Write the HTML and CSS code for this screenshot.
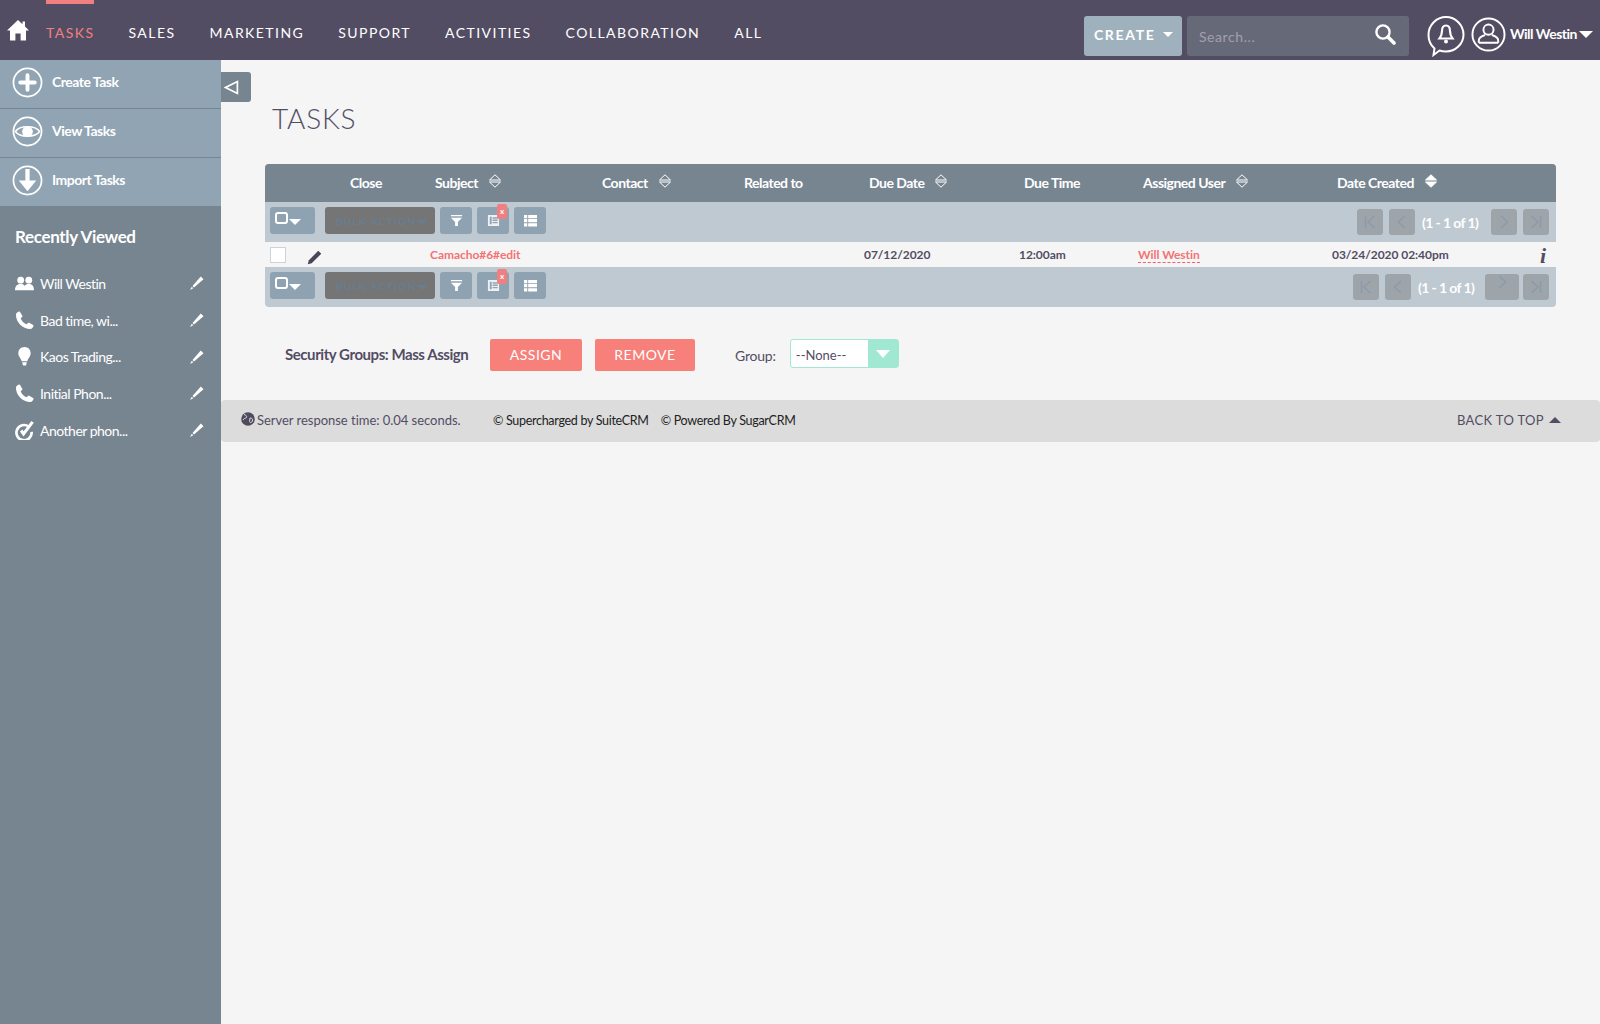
FILE: index.html
```html
<!DOCTYPE html>
<html lang="en">
<head>
  <meta charset="UTF-8" />
  <title>Tasks</title>
  <link rel="stylesheet" href="styles.css">
</head>
<body>

<header class="topbar">
  <svg class="home-icon" viewBox="0 0 22 22"><path d="M11 1 L15.500 5.200 V2.500 H18 V7.600 L22 11.600 H19 V21.500 H13.600 V14.500 H8.400 V21.500 H3 V11.600 H0 Z" fill="#fff"/></svg>
  <nav class="nav">
    <a class="active">TASKS</a>
    <a>SALES</a>
    <a>MARKETING</a>
    <a>SUPPORT</a>
    <a>ACTIVITIES</a>
    <a>COLLABORATION</a>
    <a>ALL</a>
  </nav>
  <div class="top-right">
    <div class="create-btn">CREATE <i class="caret"></i></div>
    <div class="search">
      <span>Search...</span>
      <svg viewBox="0 0 22 22"><circle cx="9" cy="9" r="6.600" fill="none" stroke="#fff" stroke-width="2.400"/><path d="M14 14 L20 20" stroke="#fff" stroke-width="3.600" stroke-linecap="round"/></svg>
    </div>
    <svg class="bell" viewBox="0 0 38 42"><path d="M7.500 33.500 C3.500 30 1.500 25 1.500 20 C1.500 10 9.500 2 19 2 C28.500 2 36.500 10 36.500 19.500 C36.500 29 28.500 36.500 19 36.500 C16.500 36.500 14.500 36.200 12.500 35.500 L6.500 40 Z" fill="none" stroke="#fff" stroke-width="2"/><path d="M19 10.500 C16 10.500 15 13 15 16 C15 19.500 14 21.500 12.500 23.500 H25.500 C24 21.500 23 19.500 23 16 C23 13 22 10.500 19 10.500 Z" fill="none" stroke="#fff" stroke-width="2.200"/><circle cx="19" cy="26.500" r="2" fill="#fff"/></svg>
    <svg class="user" viewBox="0 0 36 36"><circle cx="18" cy="18" r="16.500" fill="none" stroke="#fff" stroke-width="2"/><circle cx="18" cy="13" r="5.200" fill="none" stroke="#fff" stroke-width="2"/><path d="M8 26.500 V24.500 C8 21.500 11 19.500 14.500 18.500 M28 26.500 V24.500 C28 21.500 25 19.500 21.500 18.500 M8 26.500 H28" fill="none" stroke="#fff" stroke-width="2"/></svg>
    <span class="user-name">Will Westin</span>
    <i class="caret user-caret"></i>
  </div>
</header>

<div class="layout">
  <aside class="sidebar">
    <a class="action">
      <svg viewBox="0 0 32 32"><circle cx="16" cy="16" r="14.500" fill="none" stroke="#fff" stroke-width="1.800"/><path d="M16 8.500 V23.500 M8.500 16 H23.500" stroke="#fff" stroke-width="4" stroke-linecap="round"/></svg>
      Create Task
    </a>
    <a class="action">
      <svg viewBox="0 0 32 32"><circle cx="16" cy="16" r="14.500" fill="none" stroke="#fff" stroke-width="1.800"/><path d="M3.500 16 C8 9.500 24 9.500 28.500 16 C24 22.500 8 22.500 3.500 16 Z" fill="none" stroke="#fff" stroke-width="1.600"/><circle cx="16" cy="16" r="5.500" fill="#fff"/></svg>
      View Tasks
    </a>
    <a class="action">
      <svg viewBox="0 0 32 32"><circle cx="16" cy="16" r="14.500" fill="none" stroke="#fff" stroke-width="1.800"/><path d="M13.800 4 H18.200 V16 H25 L16 27 L7 16 H13.800 Z" fill="#fff"/></svg>
      Import Tasks
    </a>

    <h3 class="recent-title">Recently Viewed</h3>
    <ul class="recent">
      <li>
        <svg class="recent-icon" viewBox="0 0 20 16"><circle cx="6" cy="4.500" r="3.600" fill="#fff"/><circle cx="14.500" cy="4.500" r="3.600" fill="#fff"/><path d="M0 15 C0 10 3 8.500 6 8.500 C8 8.500 9.500 9.200 10.200 10.500 C11 9.200 12.500 8.500 14.500 8.500 C17.500 8.500 20 10 20 15 Z" fill="#fff"/></svg>
        <span>Will Westin</span>
        <svg class="recent-edit" viewBox="0 0 14 14"><path d="M10.800 .5 L13.500 3.200 L4 11.500 L2.500 10 Z M0 14 L1.800 10.800 L3.300 12.300 Z" fill="#fff"/></svg>
      </li>
      <li>
        <svg class="recent-icon" viewBox="0 0 20 20"><path d="M1 4 C1 2 3 .5 5 .5 L8 5.500 L6 8 C7 10.500 9.500 13 12 14 L14.500 12 L19.500 15 C19.500 17 18 19 16 19 C8 19 1 12 1 4 Z" fill="#fff"/></svg>
        <span>Bad time, wi...</span>
        <svg class="recent-edit" viewBox="0 0 14 14"><path d="M10.800 .5 L13.500 3.200 L4 11.500 L2.500 10 Z M0 14 L1.800 10.800 L3.300 12.300 Z" fill="#fff"/></svg>
      </li>
      <li>
        <svg class="recent-icon" viewBox="0 0 20 20"><path d="M10 0 C14 0 16.500 3 16.500 6.500 C16.500 10 13.500 12 13 15 H7 C6.500 12 3.500 10 3.500 6.500 C3.500 3 6 0 10 0 Z M7.500 16 H12.500 L11.500 19.500 H8.500 Z" fill="#fff"/></svg>
        <span>Kaos Trading...</span>
        <svg class="recent-edit" viewBox="0 0 14 14"><path d="M10.800 .5 L13.500 3.200 L4 11.500 L2.500 10 Z M0 14 L1.800 10.800 L3.300 12.300 Z" fill="#fff"/></svg>
      </li>
      <li>
        <svg class="recent-icon" viewBox="0 0 20 20"><path d="M1 4 C1 2 3 .5 5 .5 L8 5.500 L6 8 C7 10.500 9.500 13 12 14 L14.500 12 L19.500 15 C19.500 17 18 19 16 19 C8 19 1 12 1 4 Z" fill="#fff"/></svg>
        <span>Initial Phon...</span>
        <svg class="recent-edit" viewBox="0 0 14 14"><path d="M10.800 .5 L13.500 3.200 L4 11.500 L2.500 10 Z M0 14 L1.800 10.800 L3.300 12.300 Z" fill="#fff"/></svg>
      </li>
      <li>
        <svg class="recent-icon" viewBox="0 0 20 20"><path d="M14.500 6 A8 8 0 1 0 17.500 11.500" fill="none" stroke="#fff" stroke-width="2.800"/><path d="M6.500 10 L9 13.500 L18.500 1" fill="none" stroke="#fff" stroke-width="3.200"/></svg>
        <span>Another phon...</span>
        <svg class="recent-edit" viewBox="0 0 14 14"><path d="M10.800 .5 L13.500 3.200 L4 11.500 L2.500 10 Z M0 14 L1.800 10.800 L3.300 12.300 Z" fill="#fff"/></svg>
      </li>
    </ul>
  </aside>

  <main class="main">
    <div class="collapse-btn">
      <svg viewBox="0 0 14 14"><path d="M12.500 1.500 V12.500 L1.500 7 Z" fill="none" stroke="#fff" stroke-width="1.600"/></svg>
    </div>

    <div class="content">
      <h1 class="title">TASKS</h1>

      <div class="list">
        <div class="list-head">
          <div></div><div></div>
          <div>Close</div>
          <div>Subject <svg class="sort" viewBox="0 0 12 14"><path d="M6 .8 L11.500 6 H.5 Z M.5 8 H11.500 L6 13.200 Z" fill="none" stroke="#fff"/></svg></div>
          <div>Contact <svg class="sort" viewBox="0 0 12 14"><path d="M6 .8 L11.500 6 H.5 Z M.5 8 H11.500 L6 13.200 Z" fill="none" stroke="#fff"/></svg></div>
          <div>Related to</div>
          <div>Due Date <svg class="sort" viewBox="0 0 12 14"><path d="M6 .8 L11.500 6 H.5 Z M.5 8 H11.500 L6 13.200 Z" fill="none" stroke="#fff"/></svg></div>
          <div>Due Time</div>
          <div>Assigned User <svg class="sort" viewBox="0 0 12 14"><path d="M6 .8 L11.500 6 H.5 Z M.5 8 H11.500 L6 13.200 Z" fill="none" stroke="#fff"/></svg></div>
          <div>Date Created <svg class="sort" viewBox="0 0 12 14"><path d="M6 .8 L11.500 6 H.5 Z" fill="#fff" stroke="#fff"/><path d="M.5 8 H11.500 L6 13.200 Z" fill="#fff" stroke="#fff"/></svg></div>
          <div></div>
        </div>

        <div class="toolbar">
          <div class="tool tool-select"><i class="box"></i><i class="caret"></i></div>
          <div class="bulk">BULK ACTION<i class="caret"></i></div>
          <div class="tool"><svg viewBox="0 0 14 14"><path d="M1 1 H13 V2.500 H1 Z M1 4 H13 L8.500 8.500 V13 H5.500 V8.500 Z" fill="#fff"/></svg></div>
          <div class="tool tool-badge"><svg viewBox="0 0 14 14"><path d="M1 1 H13 V13 H1 Z M3 3 V11 H5 V3 Z M6 3.500 V5 H11.500 V3.500 Z M6 6 V7.500 H11.500 V6 Z M6 8.500 V10 H11.500 V8.500 Z" fill="#fff" fill-rule="evenodd" opacity=".85"/></svg><span class="badge">x</span></div>
          <div class="tool"><svg viewBox="0 0 14 14"><path d="M0 1 H3.500 V4.500 H0 Z M4.500 1 H14 V4.500 H4.500 Z M0 5.500 H3.500 V9 H0 Z M4.500 5.500 H14 V9 H4.500 Z M0 10 H3.500 V13.500 H0 Z M4.500 10 H14 V13.500 H4.500 Z" fill="#fff"/></svg></div>
          <div class="pager">
            <div class="page-btn"><svg viewBox="0 0 14 14"><path d="M2.500 1 V13 M11.500 1 L5 7 L11.500 13" fill="none" stroke="#8d9ba8" stroke-width="1.600"/></svg></div>
            <div class="page-btn"><svg viewBox="0 0 14 14"><path d="M10 1 L3.500 7 L10 13" fill="none" stroke="#8d9ba8" stroke-width="1.600"/></svg></div>
            <span class="page-text">(1 - 1 of 1)</span>
            <div class="page-btn"><svg viewBox="0 0 14 14"><path d="M4 1 L10.500 7 L4 13" fill="none" stroke="#8d9ba8" stroke-width="1.600"/></svg></div>
            <div class="page-btn"><svg viewBox="0 0 14 14"><path d="M11.500 1 V13 M2.500 1 L9 7 L2.500 13" fill="none" stroke="#8d9ba8" stroke-width="1.600"/></svg></div>
          </div>
        </div>

        <div class="list-row">
          <div><span class="check"></span></div>
          <div class="edit-cell"><svg viewBox="0 0 16 16"><path d="M12 .8 L15.200 4 L5 14 L.8 15.200 L2 11 Z" fill="#4a4458"/></svg></div>
          <div></div>
          <div class="link">Camacho#6#edit</div>
          <div></div>
          <div></div>
          <div>07/12/2020</div>
          <div>12:00am</div>
          <div class="link user-link">Will Westin</div>
          <div>03/24/2020 02:40pm</div>
          <div class="info">i</div>
        </div>

        <div class="toolbar">
          <div class="tool tool-select"><i class="box"></i><i class="caret"></i></div>
          <div class="bulk">BULK ACTION<i class="caret"></i></div>
          <div class="tool"><svg viewBox="0 0 14 14"><path d="M1 1 H13 V2.500 H1 Z M1 4 H13 L8.500 8.500 V13 H5.500 V8.500 Z" fill="#fff"/></svg></div>
          <div class="tool tool-badge"><svg viewBox="0 0 14 14"><path d="M1 1 H13 V13 H1 Z M3 3 V11 H5 V3 Z M6 3.500 V5 H11.500 V3.500 Z M6 6 V7.500 H11.500 V6 Z M6 8.500 V10 H11.500 V8.500 Z" fill="#fff" fill-rule="evenodd" opacity=".85"/></svg><span class="badge">x</span></div>
          <div class="tool"><svg viewBox="0 0 14 14"><path d="M0 1 H3.500 V4.500 H0 Z M4.500 1 H14 V4.500 H4.500 Z M0 5.500 H3.500 V9 H0 Z M4.500 5.500 H14 V9 H4.500 Z M0 10 H3.500 V13.500 H0 Z M4.500 10 H14 V13.500 H4.500 Z" fill="#fff"/></svg></div>
          <div class="pager">
            <div class="page-btn"><svg viewBox="0 0 14 14"><path d="M2.500 1 V13 M11.500 1 L5 7 L11.500 13" fill="none" stroke="#8d9ba8" stroke-width="1.600"/></svg></div>
            <div class="page-btn"><svg viewBox="0 0 14 14"><path d="M10 1 L3.500 7 L10 13" fill="none" stroke="#8d9ba8" stroke-width="1.600"/></svg></div>
            <span class="page-text">(1 - 1 of 1)</span>
            <div class="page-btn page-wide"><svg viewBox="0 0 14 14"><path d="M4 1 L10.500 7 L4 13" fill="none" stroke="#8d9ba8" stroke-width="1.600"/></svg></div>
            <div class="page-btn"><svg viewBox="0 0 14 14"><path d="M11.500 1 V13 M2.500 1 L9 7 L2.500 13" fill="none" stroke="#8d9ba8" stroke-width="1.600"/></svg></div>
          </div>
        </div>
      </div>

      <div class="mass-assign">
        <span class="mass-label">Security Groups: Mass Assign</span>
        <button class="btn btn-assign">ASSIGN</button>
        <button class="btn btn-remove">REMOVE</button>
        <span class="group-label">Group:</span>
        <div class="select">
          <span>--None--</span>
          <div class="select-arrow"><i></i></div>
        </div>
      </div>
    </div>

    <footer class="footer">
      <svg class="globe" viewBox="0 0 14 14"><circle cx="7" cy="7" r="6.800" fill="#4f4a5e"/><path d="M3 2.500 C5 3 6 4 5.500 5.500 C4.500 6.500 3 6 2 8 M9 6 C11 6 12 7 11.500 9 C10.500 11 9 11 8.500 9.500 Z" fill="none" stroke="#dcdcdc" stroke-width="1"/></svg>
      <span class="response">Server response time: 0.04 seconds.</span>
      <span class="copy copy-first">© Supercharged by SuiteCRM</span>
      <span class="copy">© Powered By SugarCRM</span>
      <span class="back-top">BACK TO TOP <i></i></span>
    </footer>
  </main>
</div>

</body>
</html>
```

FILE: styles.css
```css
* { box-sizing: border-box; }

body {
  margin: 0;
  background: #f5f5f5;
  font-family: 'Lato', sans-serif;
  color: #534d64;
}

svg { display: block; }
i { display: block; }

.caret {
  width: 0;
  height: 0;
  border-left: 6px solid transparent;
  border-right: 6px solid transparent;
  border-top: 6px solid #fff;
}

/* top bar */
.topbar {
  height: 60px;
  background: #534d64;
  display: flex;
  align-items: center;
  padding-left: 7px;
}

.home-icon {
  width: 22px;
  height: 22px;
  margin-right: 17px;
}

.nav {
  display: flex;
  gap: 34px;
  height: 60px;
}

.nav a {
  color: #fff;
  font-size: 14px;
  font-weight: 400;
  letter-spacing: 1.45px;
  padding-top: 4px;
  line-height: 58px;
  height: 60px;
}

.nav a.active {
  color: #f08080;
  border-top: 4px solid #f08080;
  padding-top: 0;
}

.top-right {
  margin-left: auto;
  display: flex;
  align-items: center;
  height: 60px;
  padding: 12px 7px 0 0;
}

.create-btn {
  width: 98px;
  height: 40px;
  background: #a0b1be;
  border-radius: 3px;
  color: #fff;
  font-size: 14px;
  font-weight: 700;
  letter-spacing: 1.7px;
  display: flex;
  align-items: center;
  padding: 0 0 4px 10px;
  gap: 7px;
}

.create-btn .caret {
  border-left-width: 5.5px;
  border-right-width: 5.5px;
  border-top-width: 5px;
}

.search {
  width: 222px;
  height: 40px;
  margin-left: 5px;
  background: #666a78;
  border-radius: 3px;
  display: flex;
  align-items: center;
  justify-content: space-between;
  padding: 0 13px 0 12px;
  color: #a29eaf;
  font-size: 14px;
  letter-spacing: .6px;
}

.search svg {
  width: 22px;
  height: 22px;
  margin-top: -5px;
}

.bell {
  width: 38px;
  height: 42px;
  margin: 0 0 0 18px;
}

.user {
  width: 35px;
  height: 35px;
  margin: -4px 0 0 6px;
}

.user-name {
  color: #fff;
  font-size: 14px;
  font-weight: 700;
  letter-spacing: -.5px;
  margin: -5px 0 0 4px;
}

.user-caret {
  margin: -4px 0 0 2px;
  border-left-width: 7px;
  border-right-width: 7px;
  border-top-width: 7px;
}

/* sidebar */
.layout {
  display: flex;
  min-height: 964px;
}

.sidebar {
  width: 221px;
  flex-shrink: 0;
  background: #778591;
}

.action {
  display: flex;
  align-items: center;
  gap: 9px;
  height: 49px;
  padding: 0 0 5px 12px;
  background: #90a4b3;
  border-bottom: 1px solid #778591;
  color: #fff;
  font-size: 14px;
  font-weight: 700;
  letter-spacing: -.5px;
}

.action svg {
  width: 31px;
  height: 31px;
  margin-top: 2px;
}

.recent-title {
  margin: 19px 0 0 15px;
  font-size: 17px;
  font-weight: 700;
  letter-spacing: -.35px;
  color: #fff;
  line-height: 22px;
}

.recent {
  list-style: none;
  margin: 17px 0 0;
  padding: 0 0 0 15px;
}

.recent li {
  display: flex;
  align-items: center;
  height: 36.700px;
  color: #fff;
  font-size: 14px;
  font-weight: 400;
  letter-spacing: -.5px;
}

.recent-icon {
  width: 19px;
  height: 19px;
  margin-right: 6px;
}

.recent-edit {
  width: 14px;
  height: 14px;
  margin-left: auto;
  margin-right: 17px;
}

/* main */
.main {
  flex: 1;
  position: relative;
  min-width: 0;
}

.collapse-btn {
  position: absolute;
  left: 0;
  top: 12px;
  width: 30px;
  height: 30px;
  background: #778591;
  border-radius: 0 3px 3px 0;
  display: flex;
  align-items: center;
  padding-left: 3px;
}

.collapse-btn svg {
  width: 15px;
  height: 15px;
}

.content {
  padding: 41px 44px 0;
}

.title {
  margin: 0 0 0 7px;
  font-size: 28px;
  font-weight: 300;
  letter-spacing: .8px;
  line-height: 34px;
  color: #534d64;
}

.list {
  margin-top: 29px;
  border-radius: 4px;
  overflow: hidden;
  background: #bec9d2;
}

.list-head, .list-row {
  display: grid;
  grid-template-columns: 40px 40px 85px 167px 142px 125px 155px 119px 194px 198px 26px;
  align-items: center;
}

.list-head {
  height: 38px;
  padding-bottom: 2px;
  background: #778591;
  color: #fff;
  font-size: 14px;
  font-weight: 700;
  letter-spacing: -.5px;
}

.list-head > div {
  padding-left: 5px;
  display: flex;
  align-items: center;
  white-space: nowrap;
}

.sort {
  width: 12px;
  height: 14px;
  margin: -2px 0 0 11px;
}

.toolbar {
  height: 40px;
  display: flex;
  align-items: flex-start;
  padding: 5px 7px 0 5px;
  gap: 5px;
}

.tool {
  width: 32px;
  height: 27px;
  background: #8fa2b1;
  border-radius: 3px;
  display: flex;
  align-items: center;
  justify-content: center;
  position: relative;
}

.tool svg {
  width: 13px;
  height: 13px;
}

.tool-select {
  width: 45px;
  margin-right: 5px;
  justify-content: flex-start;
  padding-left: 5px;
}

.box {
  width: 13px;
  height: 12px;
  border: 2.500px solid #fff;
  border-radius: 3px;
  margin-top: -5px;
}

.tool-select .caret {
  margin: 2px 0 0 1px;
}

.bulk {
  width: 110px;
  height: 27px;
  background: #757575;
  border-radius: 3px;
  color: #667e92;
  font-size: 10px;
  font-weight: 700;
  letter-spacing: 1.300px;
  white-space: nowrap;
  display: flex;
  align-items: center;
  padding-left: 11px;
}

.bulk .caret {
  border-left-width: 5px;
  border-right-width: 5px;
  border-top: 5px solid #667e92;
  margin-top: 3px;
}

.badge {
  position: absolute;
  right: 2px;
  top: -3px;
  width: 10px;
  height: 15px;
  background: #f08080;
  border-radius: 2px;
  color: #fff;
  font-size: 8px;
  font-weight: 700;
  line-height: 14px;
  text-align: center;
}

.pager {
  margin-left: auto;
  margin-top: 2px;
  display: flex;
  align-items: center;
  gap: 6px;
}

.page-btn {
  width: 26px;
  height: 26px;
  background: #9da5ab;
  border-radius: 3px;
  display: flex;
  align-items: center;
  justify-content: center;
}

.page-btn svg {
  width: 14px;
  height: 14px;
}

.page-text {
  width: 57px;
  color: #fff;
  font-size: 14px;
  font-weight: 700;
  letter-spacing: -.6px;
  margin: 0 6px 0 1px;
  white-space: nowrap;
}

.page-wide {
  width: 34px;
  margin: 0 -2px;
}

.page-wide svg { margin-top: -10px; }

.list-row {
  height: 25px;
  background: #f5f5f5;
  color: #534d64;
  font-size: 12px;
  font-weight: 700;
  letter-spacing: -.05px;
  white-space: nowrap;
}

.check {
  display: block;
  width: 16px;
  height: 16px;
  margin-left: 5px;
  background: #fff;
  border: 1px solid #ccd3da;
}

.edit-cell svg {
  width: 15px;
  height: 15px;
  margin: 6px 0 0 2px;
}

.link { color: #f27373; }

.user-link {
  justify-self: start;
  border-bottom: 1px dashed #f0606a;
  line-height: 14px;
  margin-top: 2px;
}

.info {
  font-family: 'Liberation Serif', serif;
  font-style: italic;
  font-size: 22px;
  font-weight: 700;
  line-height: 20px;
  margin-top: 3px;
  padding-left: 10px;
}

/* mass assign */
.mass-assign {
  display: flex;
  align-items: center;
  margin-top: 32px;
  height: 32px;
  padding-left: 20px;
}

.mass-label {
  font-size: 15px;
  font-weight: 700;
  letter-spacing: -.44px;
  width: 205px;
  margin-bottom: 3px;
}

.btn {
  height: 32px;
  border: none;
  border-radius: 2px;
  background: #f8807a;
  color: #fff;
  font-family: inherit;
  font-size: 14px;
  font-weight: 400;
  letter-spacing: .5px;
  padding: 0 0 2px;
}

.btn-assign { width: 92px; }

.btn-remove {
  width: 100px;
  margin-left: 13px;
}

.group-label {
  margin-left: 40px;
  font-size: 14px;
  letter-spacing: -.2px;
}

.select {
  margin-left: 14px;
  width: 109px;
  height: 29px;
  display: flex;
  align-items: center;
  background: #fff;
  border: 1px solid #a1e8d3;
  border-radius: 3px;
  font-size: 13px;
  margin-top: -3px;
}

.select span {
  flex: 1;
  padding: 2px 0 0 5px;
}

.select-arrow {
  width: 30px;
  height: 27px;
  background: #a1e8d3;
  display: flex;
  align-items: center;
  justify-content: center;
}

.select-arrow i {
  width: 0;
  height: 0;
  border-left: 7px solid transparent;
  border-right: 7px solid transparent;
  border-top: 8px solid #fff;
}

/* footer */
.footer {
  margin-top: 29px;
  height: 42px;
  background: #dcdcdc;
  border-radius: 4px;
  display: flex;
  align-items: center;
  padding: 0 39px 2px 20px;
  font-size: 13px;
}

.globe {
  width: 14px;
  height: 14px;
  margin-right: 2px;
  margin-top: -2px;
}

.response {
  width: 236px;
  letter-spacing: -.03px;
}

.copy {
  color: #222;
  font-size: 12.500px;
  letter-spacing: -.3px;
}

.copy-first { margin-right: 12px; }

.back-top {
  margin-left: auto;
  display: flex;
  align-items: center;
  gap: 5px;
  font-size: 13px;
  letter-spacing: .35px;
}

.back-top i {
  width: 0;
  height: 0;
  border-left: 6px solid transparent;
  border-right: 6px solid transparent;
  border-bottom: 6px solid #534d64;
}
```
